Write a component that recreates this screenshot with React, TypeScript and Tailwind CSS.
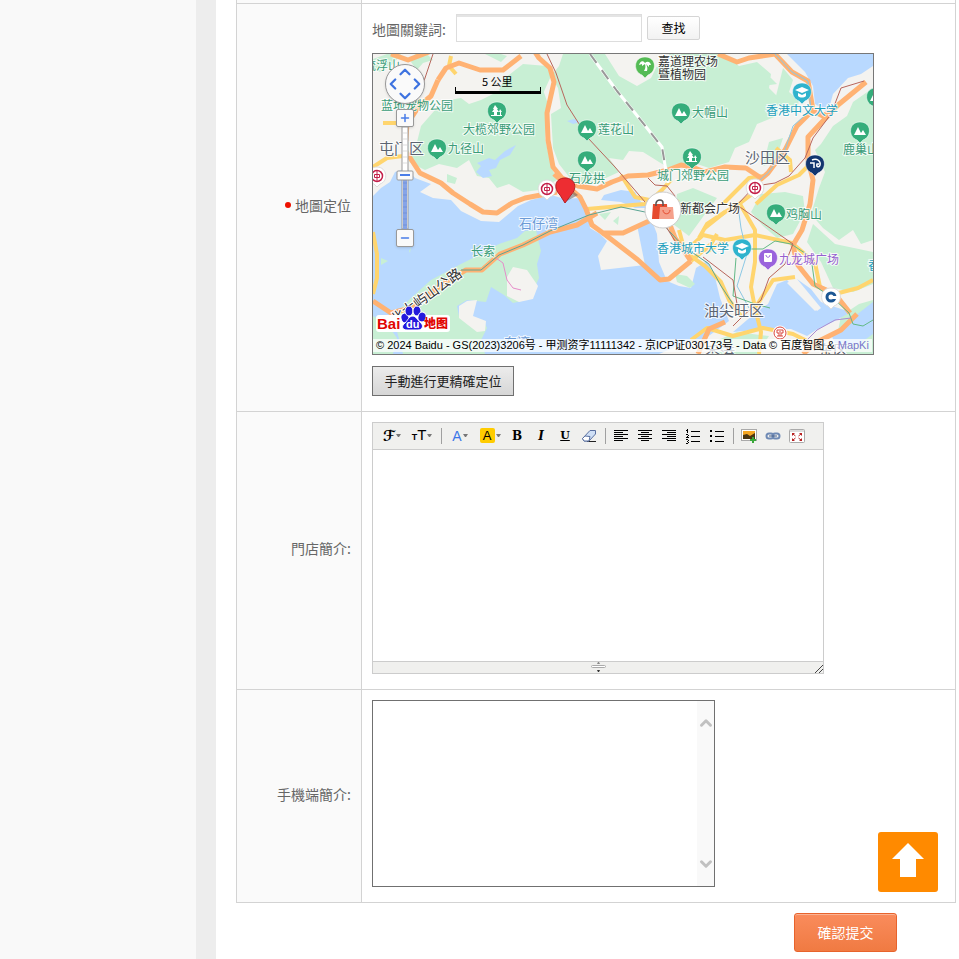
import type { ReactNode } from "react";
import { useState } from "react";
import {
  ChevronDown,
  ChevronLeft,
  ChevronRight,
  ChevronUp,
  Minus,
  Plus,
} from "lucide-react";

type LabelTone = "park" | "dark" | "district" | "water" | "campus" | "mall";

interface MapLabel {
  text: string;
  x: number;
  y: number;
  tone: LabelTone;
}

interface MapPin {
  x: number;
  y: number;
  kind: "peak" | "tree" | "palm" | "campus" | "mall" | "disney";
}

const toneClasses: Record<LabelTone, string> = {
  park: "fill-[#3a9c78] text-[12px]",
  dark: "fill-[#333333] text-[12px]",
  district: "fill-[#5b6472] text-[15px]",
  water: "fill-[#6b9bd6] text-[13px]",
  campus: "fill-[#1f9fbd] text-[12px]",
  mall: "fill-[#9660cf] text-[12px]",
};

const mapLabels: MapLabel[] = [
  { text: "流浮山", x: -9, y: 16, tone: "park" },
  { text: "蓝地宠物公园", x: 8, y: 56, tone: "park" },
  { text: "大榄郊野公园", x: 90, y: 80, tone: "park" },
  { text: "九径山", x: 75, y: 99, tone: "park" },
  { text: "屯门区", x: 6, y: 100, tone: "district" },
  { text: "嘉道理农场", x: 285, y: 12, tone: "dark" },
  { text: "暨植物园", x: 285, y: 25, tone: "dark" },
  { text: "大帽山", x: 319, y: 63, tone: "park" },
  { text: "莲花山", x: 225, y: 80, tone: "park" },
  { text: "石龙拱", x: 196, y: 129, tone: "park" },
  { text: "城门郊野公园", x: 284, y: 126, tone: "park" },
  { text: "香港中文大学", x: 393, y: 61, tone: "campus" },
  { text: "鹿巢山", x: 470, y: 100, tone: "park" },
  { text: "沙田区", x: 372, y: 109, tone: "district" },
  { text: "新都会广场", x: 307, y: 159, tone: "dark" },
  { text: "鸡胸山", x: 413, y: 165, tone: "park" },
  { text: "香港城市大学", x: 284, y: 199, tone: "campus" },
  { text: "九龙城广场", x: 406, y: 210, tone: "mall" },
  { text: "油尖旺区", x: 331, y: 262, tone: "district" },
  { text: "石仔湾", x: 146, y: 174, tone: "water" },
  { text: "长索", x: 98, y: 202, tone: "park" },
  { text: "香港", x: 495, y: 216, tone: "campus" },
  { text: "东湾", x: 131, y: 293, tone: "water" },
  { text: "香港", x: 332, y: 304, tone: "district" },
  { text: "东区", x: 445, y: 302, tone: "district" },
];

const mapPins: MapPin[] = [
  { x: 124, y: 57, kind: "tree" },
  { x: 64, y: 94, kind: "peak" },
  { x: 272, y: 12, kind: "palm" },
  { x: 214, y: 75, kind: "peak" },
  { x: 214, y: 106, kind: "peak" },
  { x: 308, y: 58, kind: "peak" },
  { x: 319, y: 103, kind: "tree" },
  { x: 429, y: 38, kind: "campus" },
  { x: 487, y: 77, kind: "peak" },
  { x: 503, y: 43, kind: "peak" },
  { x: 442, y: 110, kind: "disney" },
  { x: 403, y: 159, kind: "peak" },
  { x: 369, y: 194, kind: "campus" },
  { x: 395, y: 204, kind: "mall" },
];

const pinColors: Record<MapPin["kind"], string> = {
  peak: "#35ad7b",
  tree: "#35ad7b",
  palm: "#55bb55",
  campus: "#2fb3cd",
  mall: "#9a63dc",
  disney: "#12366f",
};

const metroStations = [
  { x: 4, y: 122 },
  { x: 174, y: 135 },
  { x: 382, y: 134 },
];

const landPatches = [
  "M0 5L14 0H28L20 10L8 18L0 16Z",
  "M42 0H54L60 6L50 9L44 16L38 8Z",
  "M112 0L128 8L134 2L128 0Z",
  "M190 0H232L246 22L264 32L278 24L284 12L300 10L296 0H352L366 12L384 8L398 20L396 34L408 46L404 62L384 70L376 88L362 94L356 108L336 114L318 108L296 114L286 108L270 98L256 97L250 106L236 104L246 118L224 128L200 128L186 110L180 94L178 60L188 54L185 34L178 22L186 12Z",
  "M36 108L43 92L48 72L62 56L76 46L88 44L96 50L108 46L128 36L146 22L168 30L175 50L172 84L178 112L184 126L166 136L150 138L136 130L124 134L116 124L104 122L96 106L84 114L66 110L52 116Z",
  "M74 120L84 124L82 130L74 128Z",
  "M126 36L132 24L150 10L174 12L178 22L168 44L150 46Z",
  "M410 14L420 26L416 38L426 46L424 56L412 60L402 46Z",
  "M448 90L460 72L474 62L480 48L500 34V186L488 190L480 176L466 186L450 174L438 160L446 134L452 118L442 96Z",
  "M384 20L398 24L404 30L390 32Z",
  "M396 88L410 84L402 108L390 112Z",
  "M388 140L412 138L430 142L432 158L420 180L404 184L390 172L378 158Z",
  "M304 140L320 134L344 144L332 160L316 182L300 170Z",
  "M440 170L462 190L500 198V230L480 238L460 234L448 208L434 188Z",
  "M468 262L486 250L500 246V300H474L464 282Z",
  "M340 288L364 278L396 282L384 300H336Z",
];

const orangeRoads = [
  "M162 -2L166 4L177 14L181 28L174 59L175 86L180 113L189 124L205 132L224 135L239 128L255 122L275 121L295 116L308 111L319 113L332 118L352 113L373 114L388 124",
  "M181 120L207 143L213 155L219 171L230 179L250 179L276 167L292 158",
  "M230 179L265 206L287 226L296 225L318 207",
  "M18 0L35 6L56 -2",
  "M65 26L73 14L86 9L107 16L130 16L148 2",
  "M65 26L58 42L46 52L34 70L32 96L47 119L68 129L80 139L97 150L110 158L124 159L139 149L152 144L168 141L184 138",
  "M0 247L18 259L38 254L72 228L93 216L109 216L127 200L150 191L177 178L204 171L224 159",
  "M345 0L364 8L376 4L402 0L419 18L435 27L440 56L424 72L412 96L395 119L380 132",
  "M493 28L465 51L448 69L435 83L435 106L440 126L437 150L429 176L420 191L424 210L440 230L462 240L477 259",
  "M438 56L450 62L457 58",
  "M292 158L302 184L318 207",
  "M484 260L468 276L444 288L430 300",
  "M325 300L336 275L352 268",
];

const yellowRoads = [
  "M78 2L76 12L83 20",
  "M10 69H32M0 113L14 104L30 102",
  "M0 178L4 200V224L0 240",
  "M214 155L248 152L272 150L286 143L306 148",
  "M248 121L262 143L286 148",
  "M276 148L289 136L298 126",
  "M326 184L334 170L352 158L366 150L387 134",
  "M350 150L376 124L392 122",
  "M383 150L404 131L426 121L436 111",
  "M403 94L417 106L418 118",
  "M332 199L352 186L382 181L419 189L442 209L447 233L462 240L485 234L500 226",
  "M332 174L352 158M367 150L382 176V208L378 233L382 254L388 278L386 300",
  "M318 207L338 190L344 180",
  "M382 254L391 240L400 226L422 223",
  "M306 176L312 198L332 212L348 228L356 246L368 262",
  "M312 198L330 181L352 186",
  "M318 286L334 274L360 282L390 274L420 280L440 290L456 300",
];

function PinGlyph({ kind }: { kind: MapPin["kind"] }) {
  switch (kind) {
    case "peak":
      return <path d="M-6 4L-2 -4L1 2L3 -1L6 4Z" fill="#fff" />;
    case "tree":
      return (
        <path
          d="M-2 -6L1 -2H0L2 1H0V4H5V5H-6V4H-3V1H-5L-3 -2H-4ZM3 -2L5 1H4V4H3V1H2Z"
          fill="#fff"
        />
      );
    case "palm":
      return (
        <path
          d="M0 -3C-2 -6 -5 -5 -6 -1L-3 -2L-3 0L0 -2C1 1 0 3 -1 5H2C3 2 2 0 1 -2L4 1L4 -1L6 -1C5 -5 2 -5 0 -3Z"
          fill="#fff"
        />
      );
    case "campus":
      return (
        <path
          d="M0 -5L7 -2L0 1L-7 -2ZM-4 1L0 3L4 1V4C2 6 -2 6 -4 4Z"
          fill="#fff"
        />
      );
    case "mall":
      return (
        <g>
          <rect x="-4" y="-5" width="8" height="9" rx="1" fill="#fff" />
          <path d="M-2 -3C-2 0 2 0 2 -3" fill="none" stroke="#9a63dc" />
        </g>
      );
    case "disney":
      return (
        <path
          d="M-5 -1H-1V4M-3 -4C2 -6 6 -3 5 1C4 4 1 3 2 0H4"
          fill="none"
          stroke="#fff"
          strokeWidth="1.5"
        />
      );
  }
}

function BaiduLogo() {
  return (
    <g>
      <rect x="3" y="261" width="74" height="17" rx="3" fill="#fff" />
      <text
        x="4"
        y="275"
        className="fill-[#e10602] font-['Liberation_Sans',sans-serif] text-[15px] font-bold"
      >
        Bai
      </text>
      <g fill="#2319dc" stroke="#fff">
        <ellipse cx="32" cy="264" rx="4" ry="5" transform="rotate(-15 32 264)" />
        <ellipse cx="36" cy="257" rx="4" ry="5" />
        <ellipse cx="44" cy="257" rx="4" ry="5" />
        <ellipse cx="49" cy="263" rx="4" ry="5" transform="rotate(15 49 263)" />
        <path d="M40 262C43 262 44 266 48 269C51 272 49 276 45 276H34C29 276 28 272 32 269C35 266 36 262 40 262Z" />
      </g>
      <text
        x="33"
        y="274"
        className="fill-white font-['Liberation_Sans',sans-serif] text-[11px] font-bold"
      >
        du
      </text>
      <text x="51" y="274" className="fill-[#e10602] text-[12px] font-black">
        地图
      </text>
    </g>
  );
}

function MapCanvas() {
  return (
    <svg
      viewBox="0 0 500 300"
      className="block h-[300px] w-[500px] font-['Noto_Sans_CJK_SC',sans-serif]"
      role="img"
      aria-label="香港地圖"
    >
      <rect width="500" height="300" fill="#f4f3f0" />
      {landPatches.map((shape) => (
        <path key={shape} d={shape} fill="#c8efd4" />
      ))}

      {/* sea, bays and reservoirs */}
      <g fill="#b9d9ff">
        <path d="M0 142L8 134L17 128L22 118L34 114L42 124L58 130L47 138L60 144L78 146L88 157L108 167L126 168L145 152L158 146L178 141L192 145L206 144L216 161L217 174L227 180L234 187L225 202L228 216L246 214L272 211L264 171L279 167L284 180L286 208L294 227L306 232L318 234L323 214L334 207L342 223L347 244L356 267L344 276L330 286L314 288L300 294L286 300H0Z" />
        <path d="M231 141L248 136L262 138L268 148L280 154L262 154L248 148L228 146Z" />
        <path d="M414 0L432 18L440 32L442 50L455 58L460 40L475 24L488 20L500 12V0Z" />
        <path d="M360 278L374 266L386 256L395 250L404 230L414 226L444 257L448 254L424 225L438 235L448 248L462 253L478 258L460 268L443 276L434 282L418 275L395 275Z" />
        <path d="M458 280L478 268L482 262L500 248V280L486 290L462 290Z" />
        <path d="M103 118L108 112L104 109L116 104L122 106L132 97L143 91L137 101L127 106L123 114L116 116L119 122L110 124Z" />
        <path d="M194 67L201 65L207 68L200 70Z" />
      </g>

      {/* Lantau and the outlying islands */}
      <g fill="#c8efd4">
        <path d="M20 262L38 244L58 226L84 212L104 202L126 190L144 184L152 177L163 176L166 189L168 197L164 210L166 224L161 235L149 247L140 249L131 241L118 233L113 248L94 246L84 252L86 262L110 266L114 274L108 286L112 300H30Z" />
        <path d="M8 204L15 207L8 211ZM36 197L38 193L37 199Z" />
        <path d="M0 262L14 270L24 284L20 300H0Z" />
        <path d="M302 220L314 222L322 230L317 234L304 228Z" />
        <path d="M226 160L238 158L232 166ZM240 167L246 162L245 171Z" />
      </g>
      <g fill="#f4f3f0">
        <path d="M134 223L140 213L154 216L165 232L160 245L146 248L134 242Z" />
        <path d="M86 252L94 247L104 246L100 262L113 267L112 277L104 278L86 264Z" />
        <path d="M414 229L419 226L446 254L442 257Z" />
      </g>

      <g fill="none" strokeLinejoin="round">
        {yellowRoads.map((road) => (
          <path key={road} d={road} stroke="#ffd56e" strokeWidth="4" />
        ))}
        {orangeRoads.map((road) => (
          <path key={road} d={road} stroke="#ffb273" strokeWidth="5" />
        ))}
        <path
          d="M402 0L419 18L435 27L438 56L420 72L412 96L395 119L380 132M365 152L368 174L374 200L364 232L376 254"
          stroke="#8cc8e4"
        />
        <path
          d="M88 216H108L126 201L150 191L177 177L216 161L248 153L272 158L286 166L310 192L336 210L348 232L360 250"
          stroke="#5aa594"
        />
        <path
          d="M364 195H390L402 187L418 190L438 203L442 232L462 246L476 259L480 270L490 272L500 266M363 204L360 242L382 250L397 254"
          stroke="#63b987"
        />
        <path
          d="M174 0L183 19L194 51L215 84L242 113L272 148M60 0L52 24L40 56M491 27L468 34L458 60L440 84L432 104L416 122L402 129L382 132L364 151L420 190L412 210L396 224L388 246L370 262L360 272M275 124L282 131L294 132L302 142L290 168L304 190M330 203L360 226L366 262"
          stroke="#b8665c"
        />
        <path d="M123 204L130 209L134 226L140 234L148 236" stroke="#e68cc9" />
        <path d="M478 264L462 266L444 276L430 290" stroke="#a98cd2" />
        <path d="M217 0L244 37L262 59L289 93L295 129" stroke="#fff" strokeWidth="3" />
        <path
          d="M217 0L244 37L262 59L289 93L295 129"
          stroke="#999"
          strokeWidth="2"
          strokeDasharray="11 9"
        />
      </g>

      {mapLabels.map((label) => (
        <text
          key={`${label.text}-${label.x}`}
          x={label.x}
          y={label.y}
          className={toneClasses[label.tone]}
          stroke="#fff"
          strokeOpacity="0.8"
          strokeWidth="2"
          paintOrder="stroke"
        >
          {label.text}
        </text>
      ))}
      <text
        transform="translate(22 271) rotate(-36)"
        className="fill-[#333333] text-[14px]"
        stroke="#fff"
        strokeWidth="2"
        paintOrder="stroke"
      >
        北大屿山公路
      </text>

      {mapPins.map((pin) => (
        <g key={`${pin.x}-${pin.y}`} transform={`translate(${pin.x} ${pin.y})`}>
          <path
            d="M0 12L-3 9C-12 6 -12 -9 0 -9C12 -9 12 6 3 9Z"
            fill={pinColors[pin.kind]}
            stroke="#fff"
            strokeOpacity="0.5"
          />
          <PinGlyph kind={pin.kind} />
        </g>
      ))}

      {metroStations.map((station) => (
        <g
          key={station.x}
          transform={`translate(${station.x} ${station.y})`}
          fill="none"
          stroke="#c4204a"
        >
          <path d="M0 11L-3 8C-12 5 -10 -9 0 -9C10 -9 12 5 3 8Z" fill="#fff" stroke="#ddd" />
          <circle r="5.5" strokeWidth="1.5" />
          <path d="M0 -5V5M-2.5 -1.5H2.5V1.5H-2.5Z" />
        </g>
      ))}

      <g transform="translate(458 243)">
        <path d="M0 12L-3 9C-12 6 -12 -9 0 -9C12 -9 12 6 3 9Z" fill="#fff" stroke="#ddd" />
        <circle r="4" fill="none" stroke="#1c5794" strokeWidth="3" />
        <path d="M2 -1H6V2H2Z" fill="#fff" />
      </g>

      <g transform="translate(407 279)" fill="none" stroke="#d9453c">
        <circle r="7" fill="#fff" stroke="#fff" />
        <circle r="6" />
        <path d="M-3 -3H3M-3 3H3M-3 -3V0H-1V3M3 -3V0H1V3M-1 -1H1" />
      </g>

      <g transform="translate(290 156)">
        <circle r="18" fill="#fff" stroke="#ccc" />
        <path d="M-10 -6H4L5 9H-11Z" fill="#e64b2f" />
        <path d="M-7 -4V-7C-6 -11 0 -11 0 -7V-4" fill="none" stroke="#555" strokeWidth="1.5" />
        <path d="M-3 -3H10L11 9H-4Z" fill="#f5a08b" />
        <path d="M0 0C0 5 7 5 7 0" fill="none" stroke="#e64b2f" />
      </g>

      {/* chosen location */}
      <path d="M192 148L205 141L201 138Z" fill="#555" fillOpacity="0.5" />
      <path
        d="M192 149L187 141C180 134 182 124 192 124C202 124 205 134 198 141Z"
        fill="#ed2d32"
        stroke="#b51e24"
      />

      <text x="109" y="32" className="fill-black text-[11px]">
        5 公里
      </text>
      <path d="M82 33H83V37H167V33H168V40H82Z" fill="#000" />
      <BaiduLogo />
    </svg>
  );
}

const panButtonClass =
  "absolute flex h-3 w-3 items-center justify-center text-[#3e73e0]";
const zoomButtonClass =
  "relative flex h-[18px] w-[18px] items-center justify-center rounded-xs border border-[#999999] bg-[#fafafa] text-[#4a7de8] shadow-sm";

function MapControls() {
  const [zoom, setZoom] = useState(11);

  return (
    <div className="absolute left-3 top-[10px] flex w-10 flex-col items-center">
      <div className="relative h-10 w-10 rounded-full border border-[#999999] bg-[#fafafa] shadow-sm">
        <button type="button" aria-label="向上" className={`${panButtonClass} left-[13px] top-px`}>
          <ChevronUp size={18} strokeWidth={3} className="shrink-0" />
        </button>
        <button type="button" aria-label="向左" className={`${panButtonClass} left-px top-[13px]`}>
          <ChevronLeft size={18} strokeWidth={3} className="shrink-0" />
        </button>
        <button type="button" aria-label="向右" className={`${panButtonClass} right-px top-[13px]`}>
          <ChevronRight size={18} strokeWidth={3} className="shrink-0" />
        </button>
        <button type="button" aria-label="向下" className={`${panButtonClass} bottom-px left-[13px]`}>
          <ChevronDown size={18} strokeWidth={3} className="shrink-0" />
        </button>
      </div>
      <button
        type="button"
        aria-label="放大"
        onClick={() => setZoom(Math.min(19, zoom + 1))}
        className={`${zoomButtonClass} mt-[5px]`}
      >
        <Plus size={12} strokeWidth={3} />
      </button>
      <div className="relative flex h-[102px] w-[18px] flex-col items-center">
        <svg viewBox="0 0 18 102" className="h-[102px] w-[18px]">
          <rect x="6" width="6" height="102" fill="#fff" stroke="#999" />
          <rect x="7" y="50" width="4" height="52" fill="#85a4e8" />
          <path
            d="M7 6H11M7 12H11M7 18H11M7 24H11M7 30H11M7 36H11"
            stroke="#dddddd"
          />
          <path
            d="M7 56H11M7 62H11M7 68H11M7 74H11M7 80H11M7 86H11M7 92H11M7 98H11"
            stroke="#7391d6"
          />
          <rect x="1" y="44" width="16" height="9" rx="1" fill="#fafafa" stroke="#999" />
          <path d="M4 48H14" stroke="#4a7de8" strokeWidth="2" />
        </svg>
        <input
          type="range"
          aria-label="縮放級別"
          min={3}
          max={19}
          value={zoom}
          onChange={(event) => setZoom(Number(event.target.value))}
          className="absolute inset-0 h-full w-full opacity-0 [writing-mode:vertical-lr]"
        />
      </div>
      <button
        type="button"
        aria-label="縮小"
        onClick={() => setZoom(Math.max(3, zoom - 1))}
        className={zoomButtonClass}
      >
        <Minus size={12} strokeWidth={3} />
      </button>
    </div>
  );
}

function LocationMap() {
  return (
    <div className="relative h-[302px] w-[502px] overflow-hidden border border-[#777777]">
      <MapCanvas />
      <MapControls />
      <p className="absolute bottom-[2px] left-0 bg-white/75 px-[3px] font-['Liberation_Sans','Noto_Sans_CJK_SC',sans-serif] text-[11px] leading-[13px] whitespace-nowrap text-black">
        © 2024 Baidu - GS(2023)3206号 - 甲测资字11111342 - 京ICP证030173号 -
        Data © 百度智图 &amp;{" "}
        <a href="#mapking" className="text-[#7777cc]">
          MapKi
        </a>
      </p>
    </div>
  );
}

interface ToolProps {
  label: string;
  wide?: boolean;
  children: ReactNode;
}

function Tool({ label, wide, children }: ToolProps) {
  return (
    <button
      type="button"
      aria-label={label}
      className={
        wide
          ? "flex h-6 w-[30px] items-center justify-center gap-px"
          : "flex h-6 w-6 items-center justify-center"
      }
    >
      {children}
      {wide && (
        <svg viewBox="0 0 5 3" className="h-[3px] w-[5px]">
          <path d="M0 0H5L3 3H2Z" fill="#777" />
        </svg>
      )}
    </button>
  );
}

function ToolSeparator() {
  return (
    <span className="flex h-6 w-2 items-center justify-center">
      <span className="h-4 w-px bg-[#a0a0a0]" />
    </span>
  );
}

function LineIcon({ d }: { d: string }) {
  return (
    <svg viewBox="0 0 16 16" className="h-4 w-4" shapeRendering="crispEdges">
      <path d={d} fill="#000" />
    </svg>
  );
}

function EditorToolbar() {
  return (
    <div className="flex h-[27px] items-center border-b border-[#cccccc] bg-[#f0f0ee] pl-1 text-black">
      <Tool label="字體" wide>
        <span className="font-['DejaVu_Serif','DejaVu_Sans',serif] text-[15px] leading-4 font-bold italic">
          ℱ
        </span>
      </Tool>
      <Tool label="文字大小" wide>
        <span className="flex items-baseline font-['Liberation_Sans',sans-serif] leading-4">
          <b className="text-[9px]">T</b>
          <span className="text-[15px]">T</span>
        </span>
      </Tool>
      <ToolSeparator />
      <Tool label="文字顏色" wide>
        <span className="font-['Liberation_Sans',sans-serif] text-[14px] leading-4 text-[#3b76e8]">
          A
        </span>
      </Tool>
      <Tool label="文字背景" wide>
        <span className="flex h-[15px] w-[15px] items-center justify-center rounded-xs bg-[#ffcc00] font-['Liberation_Sans',sans-serif] text-[13px] leading-4">
          A
        </span>
      </Tool>
      <Tool label="粗體">
        <b className="font-['DejaVu_Serif',serif] text-[12px] leading-4">B</b>
      </Tool>
      <Tool label="斜體">
        <b className="font-['DejaVu_Serif',serif] text-[12px] leading-4 italic">I</b>
      </Tool>
      <Tool label="下劃線">
        <b className="font-['DejaVu_Serif',serif] text-[11px] leading-4 underline">U</b>
      </Tool>
      <Tool label="刪除格式">
        <svg viewBox="0 0 16 16" className="h-4 w-4">
          <path d="M6 13.5H15" stroke="#222" />
          <path d="M1.5 10.5L9 2.5H14.5V6L8 13H3Z" fill="#cfdff5" stroke="#5a70a0" />
          <path d="M1.5 10.5L4 8L9 8.5L8 13H3Z" fill="#fff" stroke="#5a70a0" />
        </svg>
      </Tool>
      <ToolSeparator />
      <Tool label="左對齊">
        <LineIcon d="M1 2H15V3H1ZM1 4H10V5H1ZM1 6H15V7H1ZM1 8H10V9H1ZM1 10H15V11H1ZM1 12H10V13H1Z" />
      </Tool>
      <Tool label="居中">
        <LineIcon d="M1 2H15V3H1ZM4 4H12V5H4ZM1 6H15V7H1ZM4 8H12V9H4ZM1 10H15V11H1ZM4 12H12V13H4Z" />
      </Tool>
      <Tool label="右對齊">
        <LineIcon d="M1 2H15V3H1ZM6 4H15V5H6ZM1 6H15V7H1ZM6 8H15V9H6ZM1 10H15V11H1ZM6 12H15V13H6Z" />
      </Tool>
      <Tool label="編號">
        <LineIcon d="M6 3H15V4H6ZM6 8H15V9H6ZM6 13H15V14H6ZM2 1H3V5H2ZM1 2H2V3H1ZM1 6H3V7H1ZM3 7H4V8H3ZM2 8H3V9H2ZM1 9H4V10H1ZM1 11H3V12H1ZM3 12H4V13H3ZM2 13H3V14H2ZM3 14H4V15H3ZM1 15H3V16H1Z" />
      </Tool>
      <Tool label="項目符號">
        <LineIcon d="M6 3H15V4H6ZM6 8H15V9H6ZM6 13H15V14H6ZM1 2H3V4H1ZM1 7H3V9H1ZM1 12H3V14H1Z" />
      </Tool>
      <ToolSeparator />
      <Tool label="圖片">
        <svg viewBox="0 0 16 16" className="h-4 w-4">
          <rect x="0.5" y="1.5" width="15" height="11" fill="#fff" stroke="#aaa" />
          <rect x="2" y="3" width="12" height="8" fill="#f5a623" />
          <path d="M2 7L6 6L9 8L14 5V11H2Z" fill="#4b3512" />
          <path d="M12 9V15M9 12H15" stroke="#3aa83a" strokeWidth="2" />
        </svg>
      </Tool>
      <Tool label="超級連結">
        <svg viewBox="0 0 16 16" className="h-4 w-4" fill="none">
          <rect x="1.5" y="5.5" width="7" height="5" rx="2.5" stroke="#6f8ab5" strokeWidth="2" />
          <rect x="7.5" y="5.5" width="7" height="5" rx="2.5" stroke="#6f8ab5" strokeWidth="2" />
          <path d="M4 8H12" stroke="#4a638c" />
        </svg>
      </Tool>
      <Tool label="全屏">
        <svg viewBox="0 0 16 16" className="h-4 w-4">
          <rect x="0.5" y="1.5" width="15" height="13" rx="1" fill="#fff" stroke="#aaa" />
          <path d="M1 3H15" stroke="#ddd" strokeWidth="2" />
          <path
            d="M3 5H6L3 8ZM13 5H10L13 8ZM3 13H6L3 10ZM13 13H10L13 10Z"
            fill="#b82222"
          />
          <path
            d="M4 6L6.5 8M12 6L9.5 8M4 12L6.5 10M12 12L9.5 10"
            stroke="#b82222"
          />
        </svg>
      </Tool>
    </div>
  );
}

function RichTextEditor() {
  return (
    <div className="w-[452px] border border-[#cccccc]">
      <EditorToolbar />
      <textarea
        id="store-intro"
        className="block h-[211px] w-full resize-none bg-white p-1 text-sm outline-none"
      />
      <div className="relative flex h-3 items-center justify-center border-t border-[#cccccc] bg-[#f0f0ee]">
        <svg viewBox="0 0 15 10" className="h-[10px] w-[15px]">
          <path d="M6 2H9L8 0H7Z" fill="#888" />
          <path d="M6 8H9L8 10H7Z" fill="#333" />
          <rect x="0.5" y="3.5" width="14" height="2" rx="1" fill="#fff" stroke="#aaa" />
        </svg>
        <svg viewBox="0 0 8 8" className="absolute right-0 bottom-0 h-2 w-2">
          <path d="M0 8L8 0M4 8L8 4" stroke="#444" />
        </svg>
      </div>
    </div>
  );
}

interface FieldRowProps {
  label: ReactNode;
  htmlFor: string;
  children: ReactNode;
}

function FieldRow({ label, htmlFor, children }: FieldRowProps) {
  return (
    <tr>
      <th
        scope="row"
        className="w-[125px] border border-[#d3d3d3] bg-[#fafafa] px-[10px] pb-1 text-right align-middle font-normal"
      >
        <label htmlFor={htmlFor}>{label}</label>
      </th>
      <td className="border border-[#d3d3d3] px-[10px] pt-[10px] pb-[15px] align-top">
        {children}
      </td>
    </tr>
  );
}

export default function App() {
  const [keyword, setKeyword] = useState("");

  return (
    <div className="flex min-h-screen bg-white font-['Noto_Sans_CJK_TC',sans-serif] text-[14px] leading-5 text-[#666666]">
      <aside className="w-[216px] shrink-0 border-r-[20px] border-[#ededed] bg-[#f9f9f9]" />

      <main className="min-w-0 flex-1 pr-[3px] pl-5">
        <form onSubmit={(event) => event.preventDefault()}>
          <table className="w-full table-fixed border-collapse">
            <colgroup>
              <col className="w-[125px]" />
              <col />
            </colgroup>
            <tbody>
              <tr className="h-[3px]">
                <td className="border-x border-[#d3d3d3] bg-[#fafafa] p-0" />
                <td className="border-x border-[#d3d3d3] p-0" />
              </tr>
              <FieldRow
                htmlFor="map-keyword"
                label={
                  <span className="flex items-center justify-end gap-1">
                    <span className="h-[6px] w-[6px] rounded-full bg-[#ee1100]" />
                    地圖定位
                  </span>
                }
              >
                <div className="mb-[11px] flex items-center">
                  <label htmlFor="map-keyword" className="w-[84px] pt-[2px]">
                    地圖關鍵詞:
                  </label>
                  <input
                    id="map-keyword"
                    type="text"
                    value={keyword}
                    onChange={(event) => setKeyword(event.target.value)}
                    className="h-7 w-[186px] border border-[#dddddd] bg-white px-2 shadow-[inset_0_2px_0_#e4e4e4] outline-none"
                  />
                  <button
                    type="button"
                    className="ml-[5px] h-6 w-[53px] rounded-xs border border-[#d5d5d5] bg-linear-to-b from-white to-[#f2f2f2] text-[12px] leading-4 text-black"
                  >
                    查找
                  </button>
                </div>
                <LocationMap />
                <button
                  type="button"
                  className="mt-[11px] block h-[30px] w-[142px] border border-[#707070] bg-linear-to-b from-[#ececec] to-[#d6d6d6] text-[13px] text-[#222222]"
                >
                  手動進行更精確定位
                </button>
              </FieldRow>
              <FieldRow htmlFor="store-intro" label="門店簡介:">
                <RichTextEditor />
              </FieldRow>
              <FieldRow htmlFor="mobile-intro" label="手機端簡介:">
                <div className="flex h-[187px] w-[343px] border border-[#707070]">
                  <textarea
                    id="mobile-intro"
                    className="flex-1 resize-none bg-white p-1 outline-none"
                  />
                  <div className="flex w-[17px] flex-col items-center justify-between bg-[#f9f9f9] py-[13px] text-[#c1c1c1]">
                    <ChevronUp size={18} strokeWidth={4} />
                    <ChevronDown size={18} strokeWidth={4} />
                  </div>
                </div>
              </FieldRow>
            </tbody>
          </table>

          <div className="flex justify-end py-[10px] pr-[59px]">
            <button
              type="submit"
              className="h-[39px] w-[103px] rounded-[3px] border border-[#e8632c] bg-linear-to-b from-[#fa8c5c] to-[#f07a42] text-white shadow-[inset_0_1px_0_#fbb394]"
            >
              確認提交
            </button>
          </div>
        </form>
      </main>

      <a
        href="#top"
        aria-label="返回頂部"
        className="fixed right-[21px] bottom-[67px] flex h-[60px] w-[60px] items-center justify-center rounded-[3px] bg-[#ff8a00]"
      >
        <svg viewBox="0 0 32 34" className="mb-1 h-[34px] w-8">
          <path d="M16 0L32 16H24V34H8V16H0Z" fill="#fff" />
        </svg>
      </a>
    </div>
  );
}
